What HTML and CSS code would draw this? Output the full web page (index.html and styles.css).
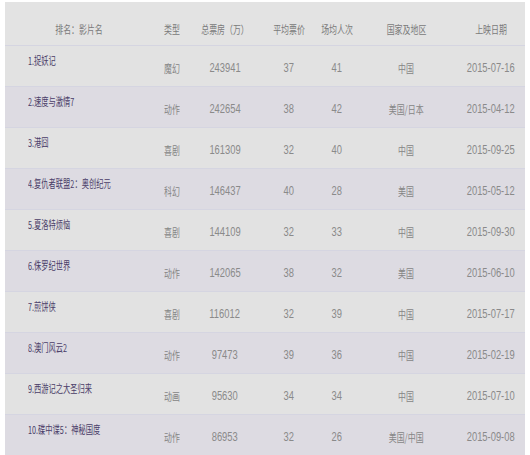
FILE: index.html
```html
<!DOCTYPE html>
<html lang="zh">
<head>
<meta charset="utf-8">
<title>票房排行</title>
<link rel="stylesheet" href="styles.css">
</head>
<body>
<div class="board">
  <div class="row head">
    <div class="c name"><span class="t">排名<span class="p">：</span>影片名</span></div>
    <div class="c"><span class="t">类型</span></div>
    <div class="c"><span class="t">总票房<span class="p">（</span>万<span class="p">）</span></span></div>
    <div class="c"><span class="t">平均票价</span></div>
    <div class="c"><span class="t">场均人次</span></div>
    <div class="c"><span class="t">国家及地区</span></div>
    <div class="c"><span class="t">上映日期</span></div>
  </div>

  <div class="row odd">
    <div class="c name"><span class="t">1.捉妖记</span></div>
    <div class="c"><span class="t">魔幻</span></div>
    <div class="c"><span class="n">243941</span></div>
    <div class="c"><span class="n">37</span></div>
    <div class="c"><span class="n">41</span></div>
    <div class="c"><span class="t">中国</span></div>
    <div class="c"><span class="n">2015-07-16</span></div>
  </div>
  <div class="row even">
    <div class="c name"><span class="t">2.速度与激情7</span></div>
    <div class="c"><span class="t">动作</span></div>
    <div class="c"><span class="n">242654</span></div>
    <div class="c"><span class="n">38</span></div>
    <div class="c"><span class="n">42</span></div>
    <div class="c"><span class="t">美国/日本</span></div>
    <div class="c"><span class="n">2015-04-12</span></div>
  </div>
  <div class="row odd">
    <div class="c name"><span class="t">3.港囧</span></div>
    <div class="c"><span class="t">喜剧</span></div>
    <div class="c"><span class="n">161309</span></div>
    <div class="c"><span class="n">32</span></div>
    <div class="c"><span class="n">40</span></div>
    <div class="c"><span class="t">中国</span></div>
    <div class="c"><span class="n">2015-09-25</span></div>
  </div>
  <div class="row even">
    <div class="c name"><span class="t">4.复仇者联盟2<span class="p">：</span>奥创纪元</span></div>
    <div class="c"><span class="t">科幻</span></div>
    <div class="c"><span class="n">146437</span></div>
    <div class="c"><span class="n">40</span></div>
    <div class="c"><span class="n">28</span></div>
    <div class="c"><span class="t">美国</span></div>
    <div class="c"><span class="n">2015-05-12</span></div>
  </div>
  <div class="row odd">
    <div class="c name"><span class="t">5.夏洛特烦恼</span></div>
    <div class="c"><span class="t">喜剧</span></div>
    <div class="c"><span class="n">144109</span></div>
    <div class="c"><span class="n">32</span></div>
    <div class="c"><span class="n">33</span></div>
    <div class="c"><span class="t">中国</span></div>
    <div class="c"><span class="n">2015-09-30</span></div>
  </div>
  <div class="row even">
    <div class="c name"><span class="t">6.侏罗纪世界</span></div>
    <div class="c"><span class="t">动作</span></div>
    <div class="c"><span class="n">142065</span></div>
    <div class="c"><span class="n">38</span></div>
    <div class="c"><span class="n">32</span></div>
    <div class="c"><span class="t">美国</span></div>
    <div class="c"><span class="n">2015-06-10</span></div>
  </div>
  <div class="row odd">
    <div class="c name"><span class="t">7.煎饼侠</span></div>
    <div class="c"><span class="t">喜剧</span></div>
    <div class="c"><span class="n">116012</span></div>
    <div class="c"><span class="n">32</span></div>
    <div class="c"><span class="n">39</span></div>
    <div class="c"><span class="t">中国</span></div>
    <div class="c"><span class="n">2015-07-17</span></div>
  </div>
  <div class="row even">
    <div class="c name"><span class="t">8.澳门风云2</span></div>
    <div class="c"><span class="t">动作</span></div>
    <div class="c"><span class="n">97473</span></div>
    <div class="c"><span class="n">39</span></div>
    <div class="c"><span class="n">36</span></div>
    <div class="c"><span class="t">中国</span></div>
    <div class="c"><span class="n">2015-02-19</span></div>
  </div>
  <div class="row odd">
    <div class="c name"><span class="t">9.西游记之大圣归来</span></div>
    <div class="c"><span class="t">动画</span></div>
    <div class="c"><span class="n">95630</span></div>
    <div class="c"><span class="n">34</span></div>
    <div class="c"><span class="n">34</span></div>
    <div class="c"><span class="t">中国</span></div>
    <div class="c"><span class="n">2015-07-10</span></div>
  </div>
  <div class="row even">
    <div class="c name"><span class="t">10.碟中谍5<span class="p">：</span>神秘国度</span></div>
    <div class="c"><span class="t">动作</span></div>
    <div class="c"><span class="n">86953</span></div>
    <div class="c"><span class="n">32</span></div>
    <div class="c"><span class="n">26</span></div>
    <div class="c"><span class="t">美国/中国</span></div>
    <div class="c"><span class="n">2015-09-08</span></div>
  </div>
</div>
</body>
</html>
```

FILE: styles.css
```css
html, body {
  margin: 0;
  padding: 0;
  background: #ffffff;
}

body {
  font-family: "Noto Sans CJK SC", "Noto Sans", sans-serif;
  color: #858585;
}

.board {
  width: 520px;
  margin: 2px 0 0 5px;
  background: #e2e2e2;
}

.row {
  display: grid;
  grid-template-columns: 148px 38px 68px 60px 36px 102px 68px;
  height: 41px;
  box-sizing: border-box;
  border-top: 1px solid #d5d5e1;
}

.row.head {
  height: 43px;
  border-top: 0;
  background: #e3e3e3;
}

.row.odd {
  background: #e2e2e2;
}

.row.even {
  background: #dddbe2;
}

.c {
  display: flex;
  justify-content: center;
  align-items: center;
  padding-top: 4px;
  min-width: 0;
}

.head .c {
  padding-top: 10px;
}

.c.name {
  justify-content: flex-start;
  align-items: flex-start;
  padding: 8px 0 0 23px;
}

.head .c.name {
  justify-content: center;
  align-items: center;
  padding: 10px 0 0 0;
}

.t {
  display: inline-block;
  white-space: nowrap;
  font-family: "Noto Sans CJK SC", "Noto Sans", sans-serif;
  font-size: 11px;
  line-height: 12px;
  transform: scaleX(0.72);
  color: #858585;
}

.p {
  font-family: "Noto Sans CJK TC", "Noto Sans CJK SC", sans-serif;
}

.head .t {
  color: #7a7a7a;
}

.name .t {
  color: #4a3d68;
  transform: scaleX(0.66);
  transform-origin: left center;
}

.head .name .t {
  color: #7a7a7a;
  transform: scaleX(0.72);
  transform-origin: center;
}

.n {
  display: inline-block;
  white-space: nowrap;
  font-family: "Liberation Sans", Arial, sans-serif;
  font-size: 12px;
  line-height: 12px;
  color: #8a8a8a;
  transform: scaleX(0.78);
}
```
